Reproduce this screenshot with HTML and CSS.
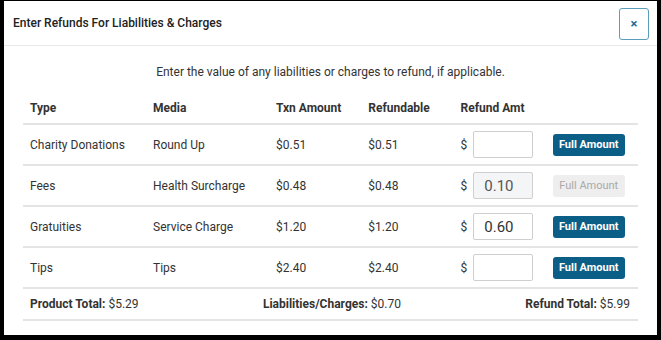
FILE: index.html
```html
<!DOCTYPE html>
<html lang="en">
<head>
    <meta charset="UTF-8">
    <meta name="viewport" content="width=device-width, initial-scale=1.0">
    <title>Refunds</title>
    <link rel="stylesheet" href="styles.css">
</head>
<body>
    <div class="modal">
        <header class="modal-header">
            <h1>Enter Refunds For Liabilities &amp; Charges</h1>
            <button class="close" aria-label="Close">&times;</button>
        </header>
        <main class="modal-body">
            <p class="intro">Enter the value of any liabilities or charges to refund, if applicable.</p>
            <table class="refunds">
                <thead>
                    <tr>
                        <th>Type</th>
                        <th>Media</th>
                        <th>Txn Amount</th>
                        <th>Refundable</th>
                        <th>Refund Amt</th>
                        <th></th>
                    </tr>
                </thead>
                <tbody>
                    <tr>
                        <td>Charity Donations</td>
                        <td>Round Up</td>
                        <td>$0.51</td>
                        <td>$0.51</td>
                        <td><span class="amt">$ <input type="text" value=""></span></td>
                        <td><button class="btn-full">Full Amount</button></td>
                    </tr>
                    <tr>
                        <td>Fees</td>
                        <td>Health Surcharge</td>
                        <td>$0.48</td>
                        <td>$0.48</td>
                        <td><span class="amt">$ <input type="text" value="0.10" disabled></span></td>
                        <td><button class="btn-full" disabled>Full Amount</button></td>
                    </tr>
                    <tr>
                        <td>Gratuities</td>
                        <td>Service Charge</td>
                        <td>$1.20</td>
                        <td>$1.20</td>
                        <td><span class="amt">$ <input type="text" value="0.60"></span></td>
                        <td><button class="btn-full">Full Amount</button></td>
                    </tr>
                    <tr>
                        <td>Tips</td>
                        <td>Tips</td>
                        <td>$2.40</td>
                        <td>$2.40</td>
                        <td><span class="amt">$ <input type="text" value=""></span></td>
                        <td><button class="btn-full">Full Amount</button></td>
                    </tr>
                </tbody>
                <tfoot>
                    <tr>
                        <td colspan="6">
                            <div class="totals">
                                <span><b>Product Total:</b> $5.29</span>
                                <span><b>Liabilities/Charges:</b> $0.70</span>
                                <span><b>Refund Total:</b> $5.99</span>
                            </div>
                        </td>
                    </tr>
                </tfoot>
            </table>
        </main>
    </div>
</body>
</html>
```

FILE: styles.css
```css
* {
  padding: 0;
  margin: 0;
  box-sizing: border-box;
}
html {
  font-size: 12px;
  font-family: Roboto, 'Liberation Sans', sans-serif;
  color: #333;
  background-color: #000;
}
body {
  background-color: #000;
  padding: 1px 4px 5px 4px;
  height: 340px;
}
.modal {
  background-color: #fff;
  height: 334px;
}
.modal-header {
  display: flex;
  align-items: center;
  justify-content: space-between;
  height: 45px;
  padding: 0 8px 0 9px;
  border-bottom: 1px solid #e8e8e8;
}
.modal-header h1 {
  font-size: 12px;
  font-weight: 500;
  color: #222;
}
.close {
  width: 30px;
  height: 32px;
  margin-top: 1px;
  border: 1px solid #5b9dbd;
  border-radius: 3px;
  background-color: #fff;
  color: #1d6a94;
  font-family: inherit;
  font-size: 13px;
  font-weight: 700;
}
.modal-body {
  padding: 16px 19px 0 19px;
}
.intro {
  text-align: center;
  line-height: 20px;
  margin-bottom: 10px;
}
.refunds {
  width: 100%;
  border-collapse: collapse;
  table-layout: fixed;
}
.refunds th,
.refunds td {
  text-align: left;
  padding: 0 7px;
  line-height: 20px;
}
.refunds th {
  font-weight: 700;
  height: 32px;
  vertical-align: middle;
}
.refunds th:nth-child(1),
.refunds th:nth-child(2) {
  width: 20%;
}
.refunds tbody td {
  height: 41px;
  border-top: 2px solid #e4e4e4;
  vertical-align: middle;
}
.refunds tfoot td {
  height: 32px;
  border-top: 2px solid #e4e4e4;
  border-bottom: 2px solid #e4e4e4;
}
.amt {
  display: flex;
  align-items: center;
  gap: 6px;
}
.amt input {
  width: 60px;
  height: 27px;
  border: 1px solid #cfcfcf;
  border-radius: 2px;
  padding: 0 10px;
  font-family: inherit;
  font-size: 15px;
  color: #333;
  background-color: #fff;
}
.amt input:disabled {
  background-color: #f4f5f6;
  color: #555;
}
.btn-full {
  width: 72px;
  height: 22px;
  border: none;
  border-radius: 3px;
  background-color: #0b5e86;
  color: #fff;
  font-family: inherit;
  font-size: 11px;
  font-weight: 700;
}
.btn-full:disabled {
  background-color: #eeeeee;
  color: #a9a9a9;
  font-weight: 400;
}
.totals {
  display: flex;
  justify-content: space-between;
  padding-right: 1px;
}
```
